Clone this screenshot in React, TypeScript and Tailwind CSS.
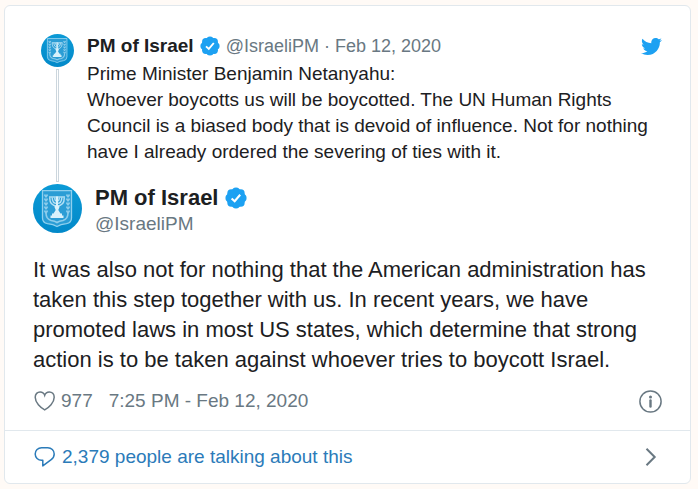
import React from "react";
import { FaTwitter } from "react-icons/fa";

const parentTweet = [
  "Prime Minister Benjamin Netanyahu:",
  "Whoever boycotts us will be boycotted. The UN Human Rights Council is a biased body that is devoid of influence. Not for nothing have I already ordered the severing of ties with it.",
];

const mainTweet =
  "It was also not for nothing that the American administration has taken this step together with us. In recent years, we have promoted laws in most US states, which determine that strong action is to be taken against whoever tries to boycott Israel.";

const leaves = [13, 17, 21, 25, 29];

function Avatar({ className }: any) {
  return (
    <svg viewBox="0 0 49 49" className={className} role="img" aria-label="PM of Israel">
      <defs>
        <linearGradient id="sky" x1="0" y1="0" x2="0" y2="1">
          <stop offset="0" stopColor="#0b9ad6" />
          <stop offset="1" stopColor="#0389c9" />
        </linearGradient>
      </defs>
      <circle cx="24.5" cy="24.5" r="24.5" fill="url(#sky)" />
      <path
        d="M9.500 6.700H38.500V34Q38.500 38.800 33.500 39.600Q27.500 40.300 24 42.500Q20.500 40.300 14.500 39.600Q9.500 38.800 9.500 34Z"
        fill="#2b9dd5"
        stroke="#8fd0ee"
        strokeWidth="1.300"
      />
      <g fill="none" stroke="#8ccdec" strokeWidth="1.600">
        {leaves.map((y) => (
          <path
            key={y}
            d={`M13 ${y}l-1.500-2.500M13 ${y}l1.500-2.500M35 ${y}l-1.500-2.500M35 ${y}l1.500-2.500`}
          />
        ))}
        <path d="M13 29Q13 35 18 36.500Q22 37 24 38.500Q26 37 30 36.500Q35 35 35 29" />
      </g>
      <g fill="none" stroke="#b5e1f5" strokeWidth="1.400">
        <path d="M16.700 13.500C16.700 19.500 19.500 22 24 22S31.300 19.500 31.300 13.500" />
        <path d="M19.200 13.500C19.200 17.500 21 19.500 24 19.500S28.800 17.500 28.800 13.500" />
        <path d="M21.700 13.500C21.700 16 22.500 17 24 17S26.300 16 26.300 13.500" />
        <path d="M16 13H32" />
      </g>
      <path
        d="M23 12.500H25V21.500L26.700 22.500L25.300 26L27.500 29.500H29V31.500H30.500V34H17.500V31.500H19V29.500H20.500L22.700 26L21.300 22.500L23 21.500Z"
        fill="#d8f1fb"
      />
    </svg>
  );
}

function VerifiedBadge({ className }: any) {
  return (
    <svg viewBox="0 0 20 20" className={className} role="img" aria-label="Verified account">
      <g fill="#1da1f2">
        <circle cx="10" cy="10" r="8.500" />
        <circle cx="10" cy="4" r="3.600" />
        <circle cx="14.300" cy="5.700" r="3.600" />
        <circle cx="16" cy="10" r="3.600" />
        <circle cx="14.300" cy="14.300" r="3.600" />
        <circle cx="10" cy="16" r="3.600" />
        <circle cx="5.700" cy="14.300" r="3.600" />
        <circle cx="4" cy="10" r="3.600" />
        <circle cx="5.700" cy="5.700" r="3.600" />
      </g>
      <path d="M6 10.400L8.800 12.900L13.800 7" fill="none" stroke="#fff" strokeWidth="1.900" />
    </svg>
  );
}

function HeartIcon() {
  return (
    <svg viewBox="0 0 22 22" className="size-[22px]" fill="none" stroke="#697882" strokeWidth="1.500">
      <path d="M10.700 19.800C6.500 17.600 1.200 12.500 1.200 7.200C1.200 4.100 3.400 1.900 6.100 1.900C8.300 1.900 10 3.200 10.700 5.300C11.400 3.200 13.100 1.900 15.300 1.900C18 1.900 20.200 4.100 20.200 7.200C20.200 12.500 14.900 17.600 10.700 19.800Z" />
    </svg>
  );
}

function ReplyIcon() {
  return (
    <svg viewBox="0 0 22 22" className="size-[22px]" fill="none" stroke="#2b7bb9" strokeWidth="1.500" strokeLinejoin="round">
      <path d="M7.600 1.700H13.800C17.400 1.700 20.200 4.400 20.200 8C20.200 10.200 19.200 12.200 17.200 13.600L8.800 19.900V14.300H7.600C4 14.300 1.200 11.600 1.200 8C1.200 4.400 4 1.700 7.600 1.700Z" />
    </svg>
  );
}

function InfoIcon() {
  return (
    <svg viewBox="0 0 23 23" className="size-[23px]" fill="none" stroke="#697882">
      <circle cx="11.500" cy="11.500" r="10.600" strokeWidth="1.500" />
      <path d="M11.500 10.500V16.500" strokeWidth="2.400" strokeLinecap="round" />
      <circle cx="11.500" cy="7" r="1.500" fill="#697882" stroke="none" />
    </svg>
  );
}

function App() {
  return (
    <div
      className="min-h-screen bg-[#fffaf6] pt-[5px] pr-[7px] pb-[5px] pl-1 text-[19px] leading-[26px] text-[#1c2022]"
      style={{ fontFamily: '"Liberation Sans", Arial, sans-serif' }}
    >
      <article className="rounded-md border border-[#e1e8ed] bg-white">
        <div className="px-7 pt-7 pb-4">
          <div className="flex gap-[5px]">
            <div className="flex w-[49px] shrink-0 flex-col items-center">
              <Avatar className="size-[33px] shrink-0" />
              <div className="my-[2px] w-[3px] grow border border-[#ccd6dd]"></div>
            </div>
            <div className="grow pb-[19px]">
              <div className="flex items-center leading-6">
                <a href="#profile" className="font-bold">
                  PM of Israel
                </a>
                <VerifiedBadge className="mx-[6px] size-5" />
                <span className="text-[18px] text-[#697882]">@IsraeliPM · Feb 12, 2020</span>
                <a href="#twitter" aria-label="View on Twitter" className="ml-auto">
                  <FaTwitter className="size-[21px] text-[#1da1f2]" />
                </a>
              </div>
              <div className="pt-[3px]">
                {parentTweet.map((line) => (
                  <p key={line}>{line}</p>
                ))}
              </div>
            </div>
          </div>
          <div className="flex gap-[13px]">
            <Avatar className="size-[49px] shrink-0" />
            <div className="pt-px">
              <div className="flex items-center gap-[7px]">
                <a href="#profile" className="text-[22px] font-bold">
                  PM of Israel
                </a>
                <VerifiedBadge className="size-[22px]" />
              </div>
              <a href="#profile" className="block text-[#697882]">
                @IsraeliPM
              </a>
            </div>
          </div>
          <p className="mt-[18px] text-[22px] leading-[30px]">{mainTweet}</p>
          <div className="mt-[13px] flex items-center text-[#697882]">
            <button className="ml-px flex items-center gap-[5px]" aria-label="Like">
              <HeartIcon />
              <span>977</span>
            </button>
            <a href="#tweet" className="ml-4">
              7:25 PM - Feb 12, 2020
            </a>
            <a href="#info" aria-label="Twitter Ads info and privacy" className="ml-auto">
              <InfoIcon />
            </a>
          </div>
        </div>
        <a
          href="#conversation"
          className="flex items-center gap-[6px] border-t border-[#e1e8ed] py-[13px] pr-7 pl-[29px] text-[#2b7bb9]"
        >
          <ReplyIcon />
          <span>2,379 people are talking about this</span>
          <svg viewBox="0 0 23 20" className="ml-auto h-5 w-[23px]" fill="none" stroke="#697882" strokeWidth="2">
            <path d="M7.500 1.700L15.700 10L7.500 18.300" />
          </svg>
        </a>
      </article>
    </div>
  );
}

export default App;
